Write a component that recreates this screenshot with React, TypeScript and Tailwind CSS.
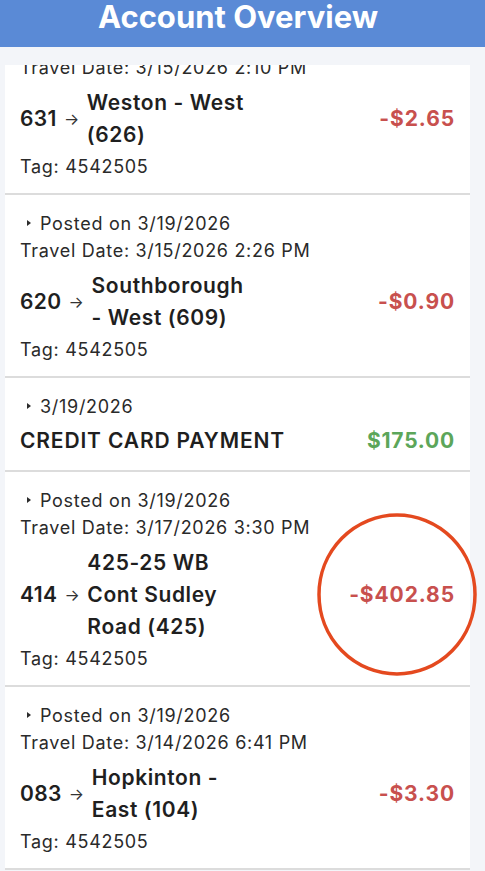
import React from "react"

type Txn = {
  posted: string
  travel?: string
  from?: string
  route?: string[]
  title?: string
  amount: string
  credit?: boolean
  tag?: string
}

const txns: Txn[] = [
  {
    posted: "Posted on 3/19/2026",
    travel: "Travel Date: 3/15/2026 2:10 PM",
    from: "631",
    route: ["Weston - West", "(626)"],
    amount: "-$2.65",
    tag: "Tag: 4542505",
  },
  {
    posted: "Posted on 3/19/2026",
    travel: "Travel Date: 3/15/2026 2:26 PM",
    from: "620",
    route: ["Southborough", "- West (609)"],
    amount: "-$0.90",
    tag: "Tag: 4542505",
  },
  {
    posted: "3/19/2026",
    title: "CREDIT CARD PAYMENT",
    amount: "$175.00",
    credit: true,
  },
  {
    posted: "Posted on 3/19/2026",
    travel: "Travel Date: 3/17/2026 3:30 PM",
    from: "414",
    route: ["425-25 WB", "Cont Sudley", "Road (425)"],
    amount: "-$402.85",
    tag: "Tag: 4542505",
  },
  {
    posted: "Posted on 3/19/2026",
    travel: "Travel Date: 3/14/2026 6:41 PM",
    from: "083",
    route: ["Hopkinton -", "East (104)"],
    amount: "-$3.30",
    tag: "Tag: 4542505",
  },
]

function Disclosure({ children }: { children: React.ReactNode }) {
  return (
    <div className="flex items-center h-[28px]">
      <span className="ml-[7px] mr-[9px] w-0 h-0 border-y-[3px] border-y-transparent border-l-[4px] border-l-[#2b2b2b]" />
      <span>{children}</span>
    </div>
  )
}

function TxnCard({ t }: { t: Txn }) {
  if (t.credit) {
    return (
      <div className="bg-white border-b-2 border-[#dcdcdc] px-[15px] pt-[14px] pb-[12px]">
        <Disclosure>{t.posted}</Disclosure>
        <div className="mt-[4px] flex items-center h-[34px]">
          <span className="font-semibold text-[21px] tracking-[0.85px] text-[#1f1f1f]">{t.title}</span>
          <span className="ml-auto font-bold text-[21px] tracking-[0.8px] text-[#5ca65a]">{t.amount}</span>
        </div>
      </div>
    )
  }
  return (
    <div className="bg-white border-b-2 border-[#dcdcdc] px-[15px] pt-[14px] pb-[12px]">
      <Disclosure>{t.posted}</Disclosure>
      <div className="h-[28px] leading-[28px]">{t.travel}</div>
      <div className="mt-[5px] flex items-center">
        <span className="font-semibold text-[21px] tracking-[0.4px] text-[#1f1f1f]">{t.from}</span>
        <span className="ml-[7px] text-[16px] text-[#333]">→</span>
        <div className="ml-[7px] font-semibold text-[21px] tracking-[0.6px] leading-[32px] text-[#1f1f1f]">
          {t.route?.map((line) => (
            <div key={line}>{line}</div>
          ))}
        </div>
        <span className="ml-auto font-bold text-[21px] tracking-[0.9px] text-[#c8504e]">{t.amount}</span>
      </div>
      <div className="mt-[2px] h-[28px] leading-[28px]">{t.tag}</div>
    </div>
  )
}

export default function App() {
  return (
    <div className="relative w-[485px] h-[871px] overflow-hidden bg-[#f3f5f9] text-[#2a2a2a] text-[18px] tracking-[0.7px] font-['Inter','Noto_Sans',sans-serif]">
      <header className="h-[47px] bg-[#5a8ad6] text-white text-center pr-[9px]">
        <h1 className="pt-[1px] text-[31px] leading-[31px] font-bold tracking-normal">Account Overview</h1>
      </header>
      <div className="pt-[18px] pl-[5px] pr-[15px]">
        <div className="h-[806px] overflow-hidden">
          <div className="-mt-[53px]">
            {txns.map((t, i) => (
              <TxnCard key={i} t={t} />
            ))}
          </div>
        </div>
      </div>
      {/* red annotation circle */}
      <svg className="absolute left-[317px] top-[513px]" width="160" height="163" viewBox="0 0 160 163">
        <ellipse cx="80" cy="81.5" rx="78" ry="79.5" fill="none" stroke="#e4491f" strokeWidth="3.5" />
      </svg>
    </div>
  )
}
